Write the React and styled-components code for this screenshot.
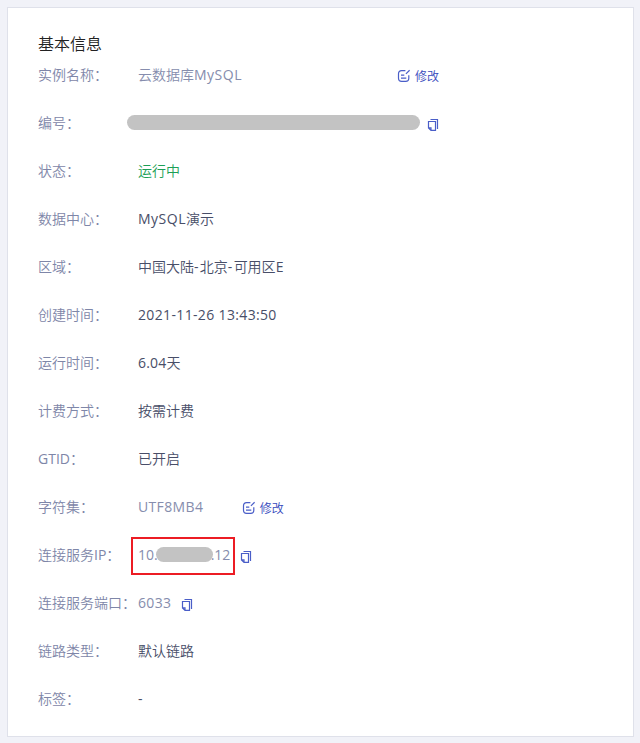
import React from "react";
import styled, { createGlobalStyle } from "styled-components";

const GlobalStyle = createGlobalStyle`
  * { box-sizing: border-box; }
  html, body { margin: 0; background: #f1f2f8; }
  body {
    font-family: "Open Sans", "Noto Sans CJK SC", sans-serif;
    font-size: 14px;
  }
`;

const Page = styled.main`
  height: 743px;
  padding: 7px 6px 6px 7px;
  background: #f1f2f8;
`;

const Card = styled.section`
  height: 730px;
  padding: 29px 30px 0;
  border: 1px solid #dfe1ea;
  background: #fff;
`;

const Title = styled.h2`
  margin: 0;
  height: 14px;
  font-size: 16px;
  font-weight: 350;
  line-height: 14px;
  color: #222;
`;

const List = styled.dl`
  margin: 0;
`;

const Row = styled.div`
  display: flex;
  align-items: center;
  height: 48px;
  line-height: 20px;
  white-space: nowrap;
`;

const Label = styled.dt`
  flex: 0 0 100px;
  font-weight: 350;
  color: #7e86a8;
`;

const tones = { muted: "#868dad", dark: "#484e68", green: "#1c9f56" };

const Value = styled.dd`
  display: flex;
  align-items: center;
  position: relative;
  margin: 0;
  font-weight: 350;
  color: ${(p) => tones[p.$tone || "dark"]};
`;

const Latin = styled.span`
  font-weight: 400;
  letter-spacing: ${(p) => p.$track}px;
`;

const Mask = styled.span`
  width: ${(p) => p.$width}px;
  height: 15px;
  margin: -2px ${(p) => p.$right || 0}px 0 ${(p) => p.$left || 0}px;
  border-radius: 8px;
  background: #c3c3c3;
`;

const Highlight = styled.span`
  position: absolute;
  top: -8px;
  left: -7px;
  width: 104px;
  height: 38px;
  border: 2px solid #ec1c24;
`;

const Action = styled.button`
  display: flex;
  align-items: center;
  gap: 4px;
  margin: ${(p) => p.$top || 0}px 0 0 ${(p) => p.$gap}px;
  padding: 0;
  border: 0;
  background: none;
  font: 350 12px/18px "Noto Sans CJK SC", sans-serif;
  color: #3448bc;
`;

const Glyph = styled.svg`
  display: block;
  fill: none;
  stroke: #4a5ec8;
  stroke-width: 1.2;
`;

const EditIcon = () => (
  <Glyph width="14" height="14" viewBox="0 0 14 14">
    <path d="M8.4 1.6H4.6Q1.5 1.6 1.5 4.7V9.3Q1.5 12.4 4.6 12.4H8.7Q11.8 12.4 11.8 9.3V6.3M4 6.2H7.3M4 9.2H9.3M8.9 4.9L12.6 1.3" />
  </Glyph>
);

const CopyIcon = () => (
  <Glyph width="12" height="13" viewBox="0 0 12 13">
    <path d="M3.5 1.5H10.5V11M1.5 3.5H8.5V12.4H4L1.5 9.9ZM1.5 9.9H4V12.4" />
  </Glyph>
);

const Mixed = ({ children, track = 0.35 }) =>
  children
    .split(/([\x20-\x7e]+)/)
    .filter(Boolean)
    .map((run, i) =>
      /^[\x20-\x7e]/.test(run) ? (
        <Latin key={i} $track={track}>{run}</Latin>
      ) : (
        <span key={i}>{run}</span>
      )
    );

const Text = ({ children, track }) => (
  <span>
    <Mixed track={track}>{children}</Mixed>
  </span>
);

const Edit = ({ gap }) => (
  <Action $gap={gap} $top={2}>
    <EditIcon />
    修改
  </Action>
);

const Copy = ({ gap }) => (
  <Action $gap={gap} $top={2} aria-label="复制">
    <CopyIcon />
  </Action>
);

const rows = [
  { label: "实例名称：", tone: "muted", value: <><Text track={0.5}>云数据库MySQL</Text><Edit gap={155} /></> },
  { label: "编号：", value: <><Mask $width={293} $left={-11} /><Copy gap={7} /></> },
  { label: "状态：", tone: "green", value: <Text>运行中</Text> },
  { label: "数据中心：", value: <Text track={0.5}>MySQL演示</Text> },
  { label: "区域：", value: <Text track={1.3}>中国大陆-北京-可用区E</Text> },
  { label: "创建时间：", value: <Text>2021-11-26 13:43:50</Text> },
  { label: "运行时间：", value: <Text track={0.2}>6.04天</Text> },
  { label: "计费方式：", value: <Text>按需计费</Text> },
  { label: "GTID：", value: <Text>已开启</Text> },
  { label: "字符集：", tone: "muted", value: <><Text>UTF8MB4</Text><Edit gap={38.5} /></> },
  {
    label: "连接服务IP：",
    tone: "muted",
    value: (
      <>
        <Text track={0}>10.</Text>
        <Mask $width={57} $left={-2} $right={-2} />
        <Text track={0}>.12</Text>
        <Highlight />
        <Copy gap={10} />
      </>
    ),
  },
  { label: "连接服务端口：", tone: "muted", value: <><Text>6033</Text><Copy gap={10} /></> },
  { label: "链路类型：", value: <Text>默认链路</Text> },
  { label: "标签：", value: <Text>-</Text> },
];

export default function App() {
  return (
    <>
      <GlobalStyle />
      <Page>
        <Card>
          <Title>基本信息</Title>
          <List>
            {rows.map((row) => (
              <Row key={row.label}>
                <Label><Text track={0}>{row.label}</Text></Label>
                <Value $tone={row.tone}>{row.value}</Value>
              </Row>
            ))}
          </List>
        </Card>
      </Page>
    </>
  );
}
